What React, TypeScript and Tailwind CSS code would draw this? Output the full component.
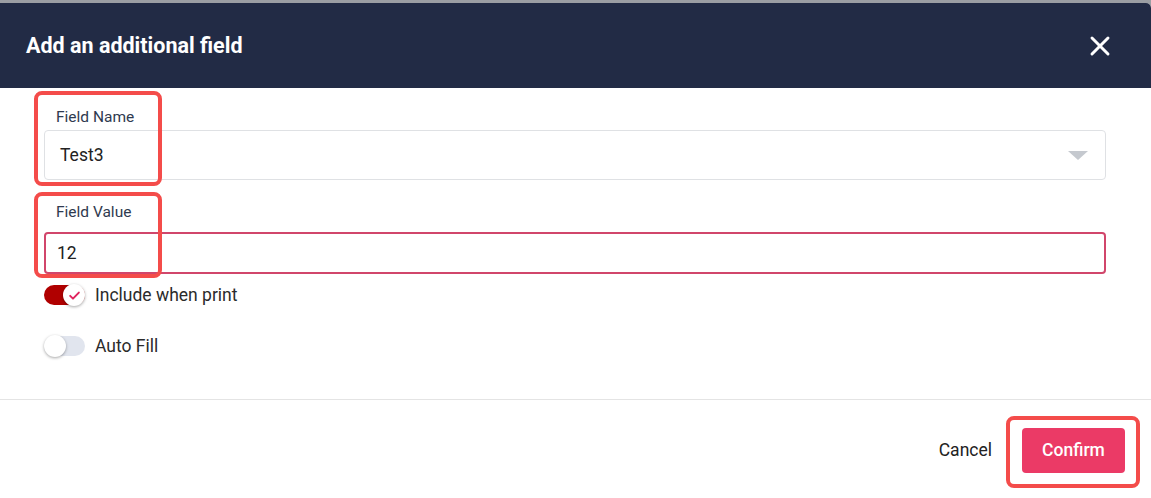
import { X } from "lucide-react";

const Toggle = ({ on }: { on: boolean }) => (
    <div className={`relative h-[20px] w-[41px] rounded-full ${on ? "bg-[#b00000]" : "bg-[#e1e5ee]"}`}>
        <div
            className={`absolute top-[-1px] flex h-[22px] w-[22px] items-center justify-center rounded-full bg-white shadow-[0_1px_3px_rgba(0,0,0,0.35)] ${on ? "right-0" : "left-0"}`}
        >
            {on && (
                <svg width="13" height="13" viewBox="0 0 12 12" fill="none">
                    <path d="M2 6.3l2.6 2.6L10 3.3" stroke="#e0245e" strokeWidth="1.8" strokeLinecap="round" strokeLinejoin="round" />
                </svg>
            )}
        </div>
    </div>
);

export default function App() {
    return (
        <div className="h-[498px] w-[1151px] overflow-hidden bg-[#9b9ea3] pt-[3px] font-['Roboto',sans-serif]">
            <div className="relative flex h-[495px] w-[1151px] flex-col overflow-hidden rounded-tr-[5px] bg-white">
                {/* Header */}
                <div className="flex h-[85px] shrink-0 items-center justify-between bg-[#222b45] pl-[26px] pr-[35px]">
                    <div className="text-[21.5px] font-bold leading-[28px] text-white">Add an additional field</div>
                    <X className="h-[32px] w-[32px] text-white" strokeWidth={2.2} />
                </div>

                {/* Body */}
                <div className="flex flex-col px-[44px] pt-[19px]">
                    <label className="px-3 text-[15.5px] leading-[20px] text-[#2f3a4f]">Field Name</label>
                    <div className="mt-[3px] flex h-[50px] w-[1062px] items-center justify-between rounded-[4px] border border-[#dfe1e4] pl-[15px] pr-[17px]">
                        <span className="text-[17.5px] text-[#222]">Test3</span>
                        <svg width="20" height="9" viewBox="0 0 20 9">
                            <path d="M0 0h20L10 9z" fill="#c5c9cf" />
                        </svg>
                    </div>

                    <label className="mt-[22px] px-3 text-[15.5px] leading-[20px] text-[#2f3a4f]">Field Value</label>
                    <div className="mt-[10px] flex h-[42px] w-[1062px] items-center rounded-[4px] border-2 border-[#d1466b] pl-[11px]">
                        <span className="text-[17.5px] text-[#222]">12</span>
                    </div>

                    <div className="mt-[10px] flex h-[22px] items-center gap-[10px]">
                        <Toggle on />
                        <span className="text-[17.5px] leading-[22px] text-[#2b2b2b]">Include when print</span>
                    </div>
                    <div className="mt-[29px] flex h-[22px] items-center gap-[10px]">
                        <Toggle on={false} />
                        <span className="text-[17.5px] leading-[22px] text-[#2b2b2b]">Auto Fill</span>
                    </div>
                </div>

                {/* Footer */}
                <div className="mt-[42px] flex h-[98px] items-start justify-end gap-[30px] border-t border-[#e4e4e4] pr-[26px] pt-[28px]">
                    <button className="h-[45px] text-[17.5px] text-[#222]">Cancel</button>
                    <button className="h-[45px] w-[103px] rounded-[4px] bg-[#eb3a66] text-[17.5px] font-medium text-white">Confirm</button>
                </div>

                {/* Annotation boxes */}
                <div className="absolute left-[34px] top-[88px] h-[95px] w-[128px] rounded-[8px] border-4 border-[#f44c4a]" />
                <div className="absolute left-[34px] top-[189px] h-[86px] w-[128px] rounded-[8px] border-4 border-[#f44c4a]" />
                <div className="absolute left-[1006px] top-[413px] h-[72px] w-[134px] rounded-[8px] border-4 border-[#f44c4a]" />
            </div>
        </div>
    );
}
